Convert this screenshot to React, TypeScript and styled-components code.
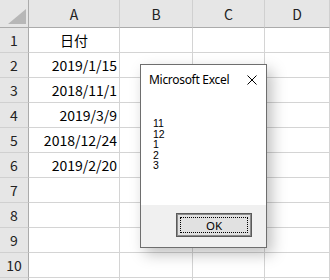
import { FC } from "react";
import styled, { createGlobalStyle } from "styled-components";

const GlobalStyle = createGlobalStyle`
    html, body {
        margin: 0;
        padding: 0;
        background: #ffffff;
    }
`;

const columns = ["A", "B", "C", "D"];
const dates = ["2019/1/15", "2018/11/1", "2019/3/9", "2018/12/24", "2019/2/20"];
const rows = Array.from({ length: 11 }, (_, i) => i + 1);
const messageLines = ["11", "12", "1", "2", "3"];

const App: FC = () => {
    return (
        <>
            <GlobalStyle />
            <Screen>
                <Sheet>
                    <Corner>
                        <svg width="18" height="15" viewBox="0 0 18 15">
                            <polygon points="18,0 18,15 0,15" fill="#b7b7b7" />
                        </svg>
                    </Corner>
                    {columns.map((c) => (
                        <ColHeader key={c}>{c}</ColHeader>
                    ))}
                    {rows.map((r) => (
                        <RowGroup key={r}>
                            {/* row 11 only peeks in at the bottom edge */}
                            <RowHeader>{r <= 10 ? r : ""}</RowHeader>
                            <Cell align={r === 1 ? "center" : "right"}>
                                {r === 1 ? "日付" : dates[r - 2] ?? ""}
                            </Cell>
                            <Cell />
                            <Cell />
                            <Cell />
                        </RowGroup>
                    ))}
                </Sheet>

                <Dialog>
                    <TitleBar>
                        <span>Microsoft Excel</span>
                        <svg width="10" height="10" viewBox="0 0 10 10">
                            <path d="M0.5 0.5 L9.5 9.5 M9.5 0.5 L0.5 9.5" stroke="#000" strokeWidth="1" />
                        </svg>
                    </TitleBar>
                    <Message>
                        {messageLines.map((l, i) => (
                            <div key={i}>{l}</div>
                        ))}
                    </Message>
                    <Footer>
                        <OkButton>
                            <FocusRect>OK</FocusRect>
                        </OkButton>
                    </Footer>
                </Dialog>
            </Screen>
        </>
    );
};

export default App;

const Screen = styled.div`
    position: relative;
    width: 330px;
    height: 280px;
    overflow: hidden;
    background: #ffffff;
`;

const Sheet = styled.div`
    display: grid;
    grid-template-columns: 29px 91px 73px 72px 1fr;
    grid-template-rows: 28px repeat(11, 25px);
    font-family: "Noto Sans CJK JP", "Noto Sans", sans-serif;
    font-size: 14px;
    color: #000;
`;

const RowGroup = styled.div`
    display: contents;
`;

const HeaderBase = styled.div`
    box-sizing: border-box;
    background: #e6e6e6;
    display: flex;
    align-items: center;
    justify-content: center;
    color: #222;
`;

const Corner = styled(HeaderBase)`
    border-right: 1px solid #ababab;
    border-bottom: 1px solid #ababab;
    align-items: flex-end;
    justify-content: flex-end;
    padding: 0 2px 3px 0;
`;

const ColHeader = styled(HeaderBase)`
    border-right: 1px solid #d0d0d0;
    border-bottom: 1px solid #ababab;
`;

const RowHeader = styled(HeaderBase)`
    border-right: 1px solid #ababab;
    border-bottom: 1px solid #d0d0d0;
`;

const Cell = styled.div<{ align?: "left" | "center" | "right" }>`
    box-sizing: border-box;
    border-right: 1px solid #d4d4d4;
    border-bottom: 1px solid #d4d4d4;
    display: flex;
    align-items: center;
    justify-content: ${(p) =>
        p.align === "center" ? "center" : p.align === "right" ? "flex-end" : "flex-start"};
    padding: 0 2px;
    white-space: nowrap;
`;

const Dialog = styled.div`
    position: absolute;
    left: 140px;
    top: 64px;
    width: 127px;
    height: 184px;
    box-sizing: border-box;
    border: 1px solid #6e6e6e;
    background: #ffffff;
    box-shadow: 5px 6px 14px rgba(0, 0, 0, 0.25);
    display: flex;
    flex-direction: column;
    font-family: "Liberation Sans", Arial, sans-serif;
    color: #000;
`;

const TitleBar = styled.div`
    height: 29px;
    display: flex;
    align-items: center;
    justify-content: space-between;
    padding: 0 9px 0 8px;
    font-family: "Noto Sans", sans-serif;
    font-size: 12px;
    letter-spacing: -0.3px;
`;

const Message = styled.div`
    flex: 1;
    padding: 24px 0 0 12px;
    font-size: 10.5px;
    line-height: 10.6px;
`;

const Footer = styled.div`
    height: 42px;
    box-sizing: border-box;
    background: #f0f0f0;
    display: flex;
    justify-content: flex-end;
    align-items: flex-start;
    padding: 8px 14px 0 0;
`;

const OkButton = styled.div`
    width: 76px;
    height: 24px;
    box-sizing: border-box;
    border: 1px solid #5a5a5a;
    box-shadow: inset 0 0 0 1px #8c8c8c;
    background: #e1e1e1;
    padding: 3px;
    display: flex;
`;

const FocusRect = styled.div`
    flex: 1;
    border: 1px dotted #000;
    display: flex;
    align-items: center;
    justify-content: center;
    font-family: "Noto Sans", sans-serif;
    font-size: 11.5px;
`;
